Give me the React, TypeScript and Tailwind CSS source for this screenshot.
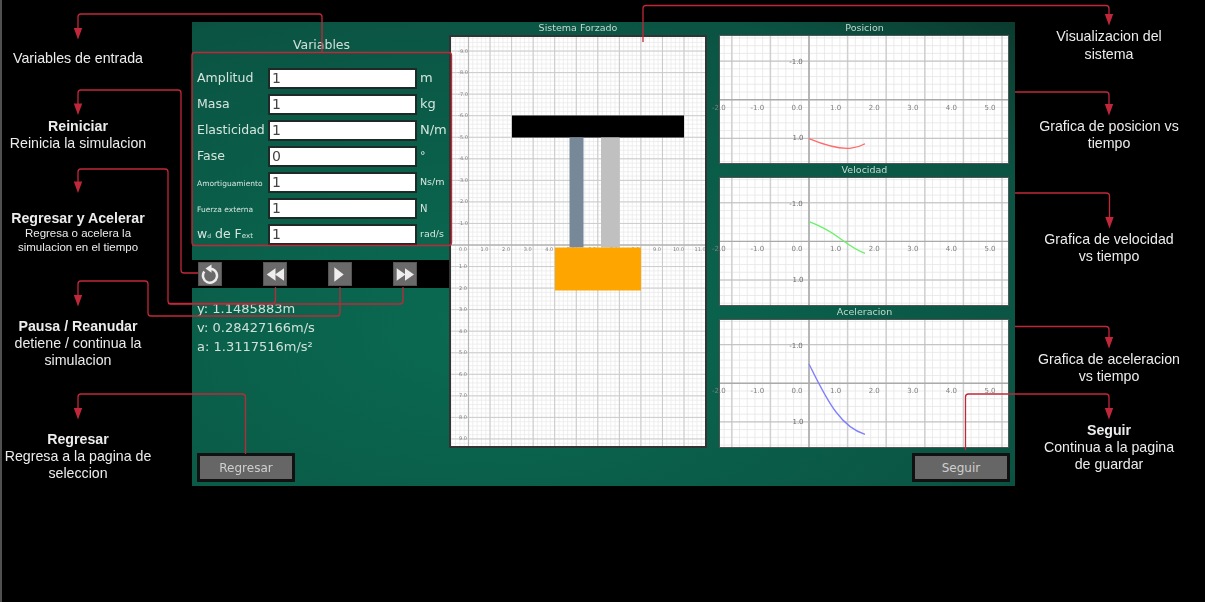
import React from "react";

const range = (from: number, to: number, step: number) => {
  const out: number[] = [];
  for (let v = from; v <= to + 0.001; v += step) out.push(v);
  return out;
};

function Field({ label, value, unit, unitClass }: { label: React.ReactNode; value: string; unit: string; unitClass: string }) {
  return (
    <div className="flex h-[20px] items-center">
      <div className="w-[71px] shrink-0 whitespace-nowrap text-[#d5e5de]">{label}</div>
      <div className="flex h-[21px] w-[149px] shrink-0 items-center border-2 border-[#1e2a26] bg-white pl-[2px] text-[14px] text-[#444]">{value}</div>
      <div className={`ml-[3px] whitespace-nowrap text-[#d5e5de] ${unitClass}`}>{unit}</div>
    </div>
  );
}

function SimChart() {
  const w = 254;
  const h = 409;
  const ox = 17.5;
  const oy = 208;
  const s = 21.55;
  const xs = range(ox - s, w, s);
  const ys = range(oy - s * 10, h, s);
  return (
    <svg viewBox={`0 0 ${w} ${h}`} className="block h-full w-full overflow-hidden">
      <rect width={w} height={h} fill="#fff" />
      {range(ox - s, w, s / 5).map((x) => <line key={`a${x}`} x1={x} x2={x} y1={0} y2={h} stroke="#e8e8e8" strokeWidth="0.7" />)}
      {range(oy - s * 10, h, s / 5).map((y) => <line key={`b${y}`} y1={y} y2={y} x1={0} x2={w} stroke="#e8e8e8" strokeWidth="0.7" />)}
      {xs.map((x) => <line key={`c${x}`} x1={x} x2={x} y1={0} y2={h} stroke="#c8c8c8" strokeWidth="1" />)}
      {ys.map((y) => <line key={`d${y}`} y1={y} y2={y} x1={0} x2={w} stroke="#cccccc" strokeWidth="1" />)}
      <line x1={ox} x2={ox} y1={0} y2={h} stroke="#b8b8b8" strokeWidth="1.2" />
      <line y1={oy} y2={oy} x1={0} x2={w} stroke="#a6a6a6" strokeWidth="1.2" />
      {range(-9, 9, 1).filter((n) => n !== 0).map((n) => (
        <text key={`y${n}`} x={12} y={oy + n * s + 1.5} fontSize="5" textAnchor="middle" fill="#808080">{`${n < 0 ? "-" : ""}${Math.abs(n)}.0`}</text>
      ))}
      {range(0, 11, 1).map((n) => (
        <text key={`x${n}`} x={12 + n * s} y={oy + 5.5} fontSize="5" textAnchor="middle" fill="#808080">{`${n}.0`}</text>
      ))}
      <rect x={61} y={78.5} width={172} height={22} fill="#000" />
      <rect x={118.5} y={100.5} width={14} height={110} fill="#778899" />
      <rect x={150} y={100.5} width={18.5} height={110} fill="#c0c0c0" />
      <rect x={104} y={210.5} width={86} height={43} fill="#ffa500" />
    </svg>
  );
}

function Plot({ axisY, color, curve }: { axisY: number; color: string; curve: string }) {
  const w = 288;
  const h = 127;
  const ox = 89;
  const s = 38.6;
  const xs = range(ox - s * 2, w, s);
  return (
    <svg viewBox={`0 0 ${w} ${h}`} className="block h-full w-full overflow-visible">
      <rect width={w} height={h} fill="#fff" />
      {range(ox - s * 3, w, s / 5).filter((x) => x >= 0).map((x) => <line key={`a${x}`} x1={x} x2={x} y1={0} y2={h} stroke="#e6e6e6" strokeWidth="0.8" />)}
      {range(axisY - s * 2, h, s / 5).filter((y) => y >= 0).map((y) => <line key={`b${y}`} y1={y} y2={y} x1={0} x2={w} stroke="#e6e6e6" strokeWidth="0.8" />)}
      {xs.map((x) => <line key={`c${x}`} x1={x} x2={x} y1={0} y2={h} stroke="#d0d0d0" strokeWidth="1.5" />)}
      {[-1, 1].map((n) => <line key={`d${n}`} y1={axisY + n * s} y2={axisY + n * s} x1={0} x2={w} stroke="#bcbcbc" strokeWidth="1" />)}
      <line x1={ox} x2={ox} y1={0} y2={h} stroke="#aeaeae" strokeWidth="1.6" />
      <line y1={axisY} y2={axisY} x1={0} x2={w} stroke="#aaaaaa" strokeWidth="1.4" />
      <text x={76} y={axisY - s + 3} fontSize="7" textAnchor="middle" fill="#6a6a6a">-1.0</text>
      <text x={78} y={axisY + s + 2} fontSize="7" textAnchor="middle" fill="#6a6a6a">1.0</text>
      {[-2, -1, 0, 1, 2, 3, 4, 5].map((n) => (
        <text key={n} x={77 + n * 38.6 + (n < 0 ? -1 : 0)} y={axisY + 10} fontSize="7" textAnchor="middle" fill="#808080">{`${n < 0 ? "-" : ""}${Math.abs(n)}.0`}</text>
      ))}
      <path d={curve} fill="none" stroke={color} strokeWidth="1.3" />
    </svg>
  );
}

function IconButton({ children }: { children: React.ReactNode }) {
  return (
    <div className="h-[24px] w-[24px] shrink-0 border border-[#555] bg-[#6a6a6a]">
      <svg viewBox="0 0 24 24" className="-m-px block h-[24px] w-[24px]" fill="#eeeeee">{children}</svg>
    </div>
  );
}

function ActionButton({ text, className }: { text: string; className: string }) {
  return (
    <div className={`flex h-[29px] w-[98px] items-center justify-center border-[3px] border-[#111] bg-[#666] text-[12px] text-[#cfcfcf] ${className}`}>{text}</div>
  );
}

function ChartBlock({ title, axisY, color, curve }: { title: string; axisY: number; color: string; curve: string }) {
  return (
    <div className="flex flex-col">
      <div className="flex h-[13px] items-center justify-center text-[9.5px] text-[#c5d8d0]">{title}</div>
      <div className="h-[129px] w-[290px] border border-[#555]">
        <Plot axisY={axisY} color={color} curve={curve} />
      </div>
    </div>
  );
}

function Note({ className, children }: { className: string; children: React.ReactNode }) {
  return (
    <div className={`absolute text-center font-['Liberation_Sans',Arial,sans-serif] text-[14.2px] leading-[17px] text-[#ececec] ${className}`}>{children}</div>
  );
}

const RED = "#c0283a";

function Arrow({ x, y }: { x: number; y: number }) {
  return <polygon points={`${x - 4.2},${y} ${x + 4.2},${y} ${x},${y + 11.5}`} fill={RED} />;
}

function Connectors() {
  const paths = [
    "M322 52V17Q322 14 319 14H81Q78 14 78 17V30",
    "M78 105V93Q78 90 81 90H178Q181 90 181 93V270Q181 273 184 273H198",
    "M78 183V172Q78 169 81 169H165Q168 169 168 172V301Q168 304 171 304H400Q403 304 403 301V287",
    "M168 303.5H272Q275.5 303.5 275.5 300V287",
    "M78 297V284Q78 281 81 281H145Q148 281 148 284V313Q148 316 151 316H337Q340 316 340 313V287",
    "M78 410V397Q78 394 81 394H242Q245.5 394 245.5 397V454",
    "M643 42V8.5Q643 5.5 646 5.5H1106Q1109 5.5 1109 8.5V16",
    "M1015 92H1106Q1109 92 1109 95V106",
    "M1015 193H1106Q1109.5 193 1109.5 196V219",
    "M1015 326.5H1106Q1109 326.5 1109 329.5V339",
    "M965.5 450V397Q965.5 394 968.5 394H1106Q1109 394 1109 397V410",
  ];
  return (
    <svg viewBox="0 0 1205 602" className="pointer-events-none absolute left-0 top-0 h-[602px] w-[1205px]">
      {paths.map((d) => <path key={d} d={d} fill="none" stroke={RED} strokeWidth="1.3" />)}
      <rect x={192} y={52.5} width={259.5} height={193} rx={3} fill="none" stroke={RED} strokeWidth="1.4" />
      <Arrow x={78} y={28} />
      <Arrow x={78} y={103.5} />
      <Arrow x={78} y={181.5} />
      <Arrow x={78} y={295} />
      <Arrow x={78} y={408} />
      <Arrow x={1109} y={14} />
      <Arrow x={1109} y={104} />
      <Arrow x={1109.5} y={217} />
      <Arrow x={1109} y={337} />
      <Arrow x={1109} y={408} />
    </svg>
  );
}

export default function App() {
  return (
    <div className="relative h-[602px] w-[1205px] overflow-hidden bg-black">
      <div className="absolute left-0 top-0 h-full w-[2px] bg-[#505050]" />
      <div className="pl-[192px] pt-[22px]">
        <div className="flex h-[464px] w-[823px] bg-[radial-gradient(ellipse_at_35%_65%,#0a6a52_0%,#0a5c48_50%,#0b5343_78%,#0b3a2e_100%)] font-['DejaVu_Sans',sans-serif] blur-[0.5px]">
          <div className="flex w-[257px] shrink-0 flex-col">
            <div className="flex h-[46px] items-end justify-center pb-[15px] pl-[2px] text-[12.5px] leading-[17px] text-[#d0e0da]">Variables</div>
            <div className="flex flex-col gap-[6px] pl-[5px] text-[12.5px]">
              <Field label="Amplitud" value="1" unit="m" unitClass="text-[13px]" />
              <Field label="Masa" value="1" unit="kg" unitClass="text-[13px]" />
              <Field label="Elasticidad" value="1" unit="N/m" unitClass="text-[13px]" />
              <Field label="Fase" value="0" unit="°" unitClass="text-[11px]" />
              <Field label={<span className="text-[7.5px]">Amortiguamiento</span>} value="1" unit="Ns/m" unitClass="text-[9.5px]" />
              <Field label={<span className="text-[7.5px]">Fuerza externa</span>} value="1" unit="N" unitClass="text-[10px]" />
              <Field
                label={<span>w<span className="text-[6px]">d</span> de F<span className="text-[7px]">ext</span></span>}
                value="1"
                unit="rad/s"
                unitClass="text-[9.5px]"
              />
            </div>
            <div className="mt-[16px] flex h-[28px] items-center gap-[41px] bg-black pl-[6px]">
              <IconButton>
                <path d="M12 6.7A7 7 0 1 1 6.3 9.6" fill="none" stroke="#eeeeee" strokeWidth="2.5" />
                <polygon points="13.5,2.5 13.5,10.8 7.5,6.6" />
              </IconButton>
              <IconButton>
                <polygon points="3.7,12.5 12.5,6.3 12.5,18.7" />
                <polygon points="12,12.5 21,6.3 21,18.7" />
              </IconButton>
              <IconButton>
                <polygon points="6.3,5.3 15.7,12.5 6.3,19.7" />
              </IconButton>
              <IconButton>
                <polygon points="21,12.5 12,6.3 12,18.7" />
                <polygon points="12.5,12.5 3.7,6.3 3.7,18.7" />
              </IconButton>
            </div>
            <div className="pl-[5px] pt-[11px] text-[13px] leading-[19px] text-[#d0e0da]">
              <div>y: 1.1485883m</div>
              <div>v: 0.28427166m/s</div>
              <div>a: 1.3117516m/s²</div>
            </div>
            <ActionButton text="Regresar" className="mb-[4px] ml-[5px] mt-auto" />
          </div>

          <div className="flex w-[258px] shrink-0 flex-col">
            <div className="flex h-[13px] items-center justify-center text-[9.5px] text-[#c5d8d0]">Sistema Forzado</div>
            <div className="h-[413px] w-[258px] border-2 border-[#333]">
              <SimChart />
            </div>
          </div>

          <div className="ml-[12px] flex w-[291px] shrink-0 flex-col">
            <ChartBlock title="Posicion" axisY={63.7} color="#ff6a6a" curve="M89 102.7C103 108.5 118 113.5 131 112.2C137 111.6 141 110 145 107.7" />
            <ChartBlock title="Velocidad" axisY={63.4} color="#66f266" curve="M89 43.7C102 48.5 108 52 118 59C127 65.5 134 71.5 145 75.3" />
            <ChartBlock title="Aceleracion" axisY={63.3} color="#8080ff" curve="M89 44C97 60 106 79 116 92C125 104 134 111 145 114.3" />
            <ActionButton text="Seguir" className="ml-[193px] mt-[5px]" />
          </div>
        </div>
      </div>

      <Connectors />

      <Note className="left-0 top-[50px] w-[156px]">Variables de entrada</Note>
      <Note className="left-0 top-[118px] w-[156px]"><b>Reiniciar</b><br />Reinicia la simulacion</Note>
      <Note className="left-0 top-[210px] w-[156px]">
        <b>Regresar y Acelerar</b>
        <div className="mt-[-1px] text-[11.5px] leading-[14px]">Regresa o acelera la<br />simulacion en el tiempo</div>
      </Note>
      <Note className="left-0 top-[318px] w-[156px]"><b>Pausa / Reanudar</b><br />detiene / continua la<br />simulacion</Note>
      <Note className="left-0 top-[431px] w-[156px]"><b>Regresar</b><br />Regresa a la pagina de<br />seleccion</Note>
      <Note className="left-[1019px] top-[27px] w-[180px] leading-[18px]">Visualizacion del<br />sistema</Note>
      <Note className="left-[1019px] top-[118px] w-[180px]">Grafica de posicion vs<br />tiempo</Note>
      <Note className="left-[1019px] top-[231px] w-[180px]">Grafica de velocidad<br />vs tiempo</Note>
      <Note className="left-[1019px] top-[351px] w-[180px]">Grafica de aceleracion<br />vs tiempo</Note>
      <Note className="left-[1019px] top-[422px] w-[180px]"><b>Seguir</b><br />Continua a la pagina<br />de guardar</Note>
    </div>
  );
}
